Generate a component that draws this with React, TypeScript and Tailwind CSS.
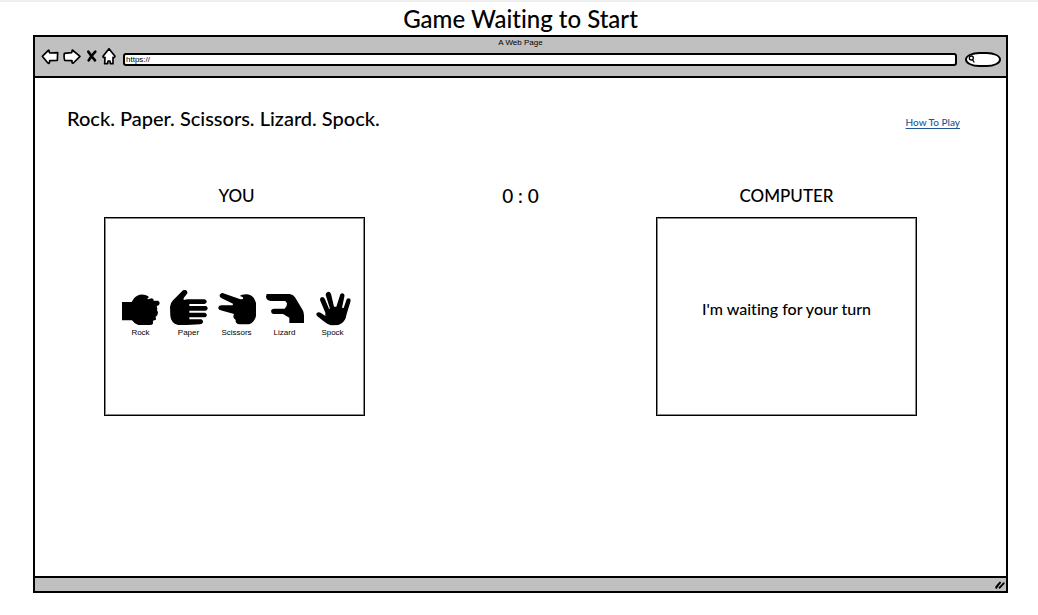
import type { ReactNode } from "react";

function ToolButton({ label, className, children }: { label: string; className: string; children: ReactNode }) {
  return (
    <button type="button" aria-label={label} className={`h-5 shrink-0 ${className}`}>
      {children}
    </button>
  );
}

function Toolbar() {
  return (
    <header className="border-b-2 border-black bg-[#c0c0c0] pb-[9px]">
      <p className="pt-px text-center font-['Liberation_Sans',sans-serif] text-[8px] leading-[9px]">A Web Page</p>
      <div className="flex items-center pr-[5px] pl-1.5">
        <ToolButton label="Back" className="w-[18px]">
          <svg viewBox="0 0 54 60" className="h-5 w-[18px] fill-white stroke-black" strokeWidth="5" strokeLinejoin="round">
            <path d="M4 28 L22 10 Q25 8 25 16 L26 18 L50 17 L49 40 L26 41 L25 48 Q24 51 20 47 Z" />
          </svg>
        </ToolButton>
        <ToolButton label="Forward" className="ml-1 w-[18px]">
          <svg viewBox="0 0 54 60" className="h-5 w-[18px] fill-white stroke-black" strokeWidth="5" strokeLinejoin="round">
            <path d="M4 19 L26 17 L28 9 L51 28 L31 48 Q26 50 27 41 L5 40 Q2 30 4 19 Z" />
          </svg>
        </ToolButton>
        <ToolButton label="Stop" className="ml-[5px] w-3">
          <svg viewBox="0 0 36 60" className="h-5 w-3 fill-none stroke-black" strokeWidth="8" strokeLinecap="round">
            <path d="M7 14 L16 27 L27 40 M28 14 Q17 25 8 40" />
          </svg>
        </ToolButton>
        <ToolButton label="Home" className="ml-1 w-3.5">
          <svg viewBox="0 0 42 60" className="h-5 w-3.5 fill-white stroke-black" strokeWidth="5" strokeLinejoin="round">
            <path d="M21 5 L39 28 Q37 34 33 31 L33 50 L25 50 L24 42 L18 42 L17 50 L8 50 L9 31 Q4 34 3 28 Z" />
          </svg>
        </ToolButton>
        <input
          aria-label="Address"
          defaultValue="https://"
          className="mt-1 ml-[7px] h-[13px] min-w-0 flex-1 rounded-[3px] border-2 border-black bg-white px-px font-['Liberation_Sans',sans-serif] text-[8px] leading-[9px] outline-none"
        />
        <label className="mt-1 ml-2 flex h-[15px] w-9 items-center rounded-[40%/50%] border-2 border-black bg-white pl-px">
          <svg viewBox="0 0 21 24" className="h-2 w-[7px] shrink-0 fill-none stroke-black" strokeWidth="4" strokeLinecap="round">
            <circle cx="10" cy="9" r="6" />
            <path d="M14 15 L18 21" />
          </svg>
          <input type="search" aria-label="Search" className="w-5 min-w-0 bg-transparent text-[8px] leading-[9px] outline-none" />
        </label>
      </div>
    </header>
  );
}

const moves = [
  {
    name: "Rock",
    shape: (
      <path d="M3 36 L32 36 Q40 18 56 14 Q70 11 82 19 L83 23 Q77 25 80 28 L93 25 Q99 27 98 32 L111 32 Q118 36 115 43 Q113 48 107 48 L109 56 L108 61 L111 67 L109 76 L104 80 L105 89 L96 92 L96 101 Q93 105 86 105 L52 105 Q39 101 33 91 L3 91 Z" />
    ),
  },
  {
    name: "Paper",
    shape: (
      <path d="M42 1 Q50 -3 54 4 Q57 9 53 13 L44 24 L44 30 L55 28 L106 28 Q114 30 113 36 Q112 41 106 42 L61 42 L61 48 L110 48 Q117 50 116 56 Q114 62 109 62 L61 62 L61 68 L108 68 Q115 71 113 78 Q111 82 106 82 L61 82 L61 88 L97 88 Q103 91 102 97 Q100 103 93 103 L53 105 L28 105 Q6 101 4 78 L3 51 Q4 39 12 31 Z" />
    ),
  },
  {
    name: "Scissors",
    shape: (
      <path d="M13 10 Q17 8 23 11 L70 28 L78 27 L78 22 L69 18 Q73 13 86 13 Q101 12 111 25 L117 38 L117 78 Q112 98 96 103 L66 103 Q54 100 56 90 Q48 86 49 78 L51 72 L11 61 Q3 59 4 52 Q6 46 13 46 L47 46 L48 41 L14 25 Q6 20 8 14 Z" />
    ),
  },
  {
    name: "Lizard",
    shape: (
      <path d="M5 12 L74 12 Q84 13 90 22 L113 60 Q117 67 117 76 L117 99 L73 99 L73 83 L54 72 L24 72 Q18 69 18 62 Q20 56 27 56 L59 56 Q67 50 66 40 L61 33 L18 33 Q4 31 3 20 Z" />
    ),
  },
  {
    name: "Spock",
    shape: (
      <path d="M44 6 Q50 4 54 11 L63 50 L70 50 L82 13 Q86 8 92 11 Q96 14 94 20 L87 53 L92 54 L101 28 Q106 22 112 27 Q114 31 112 36 L101 72 L98 84 Q93 99 76 105 L54 106 Q43 103 36 97 L13 79 Q8 74 11 69 Q17 65 24 69 L37 78 L37 68 L21 30 Q20 23 27 21 Q33 21 36 28 L48 56 L51 56 L38 15 Q38 8 44 6 Z" />
    ),
  },
];

export default function App() {
  return (
    <div className="min-h-screen border-t-2 border-[#eeeeee] bg-white pr-[30px] pb-6 pl-[33px] font-['Lato',sans-serif] font-medium text-black [font-variant-ligatures:none]">
      <h1 className="h-[33px] text-center text-2xl leading-[33px]">Game Waiting to Start</h1>
      <div className="border-2 border-black bg-white">
        <Toolbar />
        <main className="pb-40">
          <div className="flex items-center justify-between pt-6 pr-[46px] pl-8">
            <h2 className="text-xl leading-8">Rock. Paper. Scissors. Lizard. Spock.</h2>
            <a href="#how-to-play" className="mt-2 text-[10px] leading-4 text-[#245693] underline underline-offset-2">
              How To Play
            </a>
          </div>
          <div className="mt-12 flex justify-between pr-[89px] pl-[69px]">
            <section aria-labelledby="you">
              <h3 id="you" className="pb-[7px] pl-1 text-center text-[17px] leading-7">
                YOU
              </h3>
              <div className="flex h-[199px] w-[261px] items-center justify-center border border-black pb-1.5 pl-1 shadow-[inset_0_0_0_1px_#888888]">
                {moves.map((move) => (
                  <button type="button" key={move.name} className="flex w-12 flex-col items-center">
                    <svg viewBox="0 0 120 108" className="h-9 w-10 fill-black" aria-hidden="true">
                      {move.shape}
                    </svg>
                    <span className="mt-0.5 font-['Liberation_Sans',sans-serif] text-[8px] leading-[9px]">{move.name}</span>
                  </button>
                ))}
              </div>
            </section>
            <p className="pl-5 text-[19px] leading-7">0 : 0</p>
            <section aria-labelledby="computer">
              <h3 id="computer" className="pb-[7px] text-center text-[17px] leading-7">
                COMPUTER
              </h3>
              <div className="flex h-[199px] w-[261px] items-center justify-center border border-black pb-4 shadow-[inset_0_0_0_1px_#888888]">
                <p className="text-base leading-6">I'm waiting for your turn</p>
              </div>
            </section>
          </div>
        </main>
        <footer className="flex h-[15px] items-center justify-end border-t-2 border-black bg-[#c0c0c0] pr-px">
          <svg viewBox="0 0 30 24" className="h-2 w-2.5 fill-none stroke-black" strokeWidth="6" strokeLinecap="round" aria-hidden="true">
            <path d="M4 18 L15 5 M7 15 L4 20 M14 20 L26 7" />
          </svg>
        </footer>
      </div>
    </div>
  );
}
